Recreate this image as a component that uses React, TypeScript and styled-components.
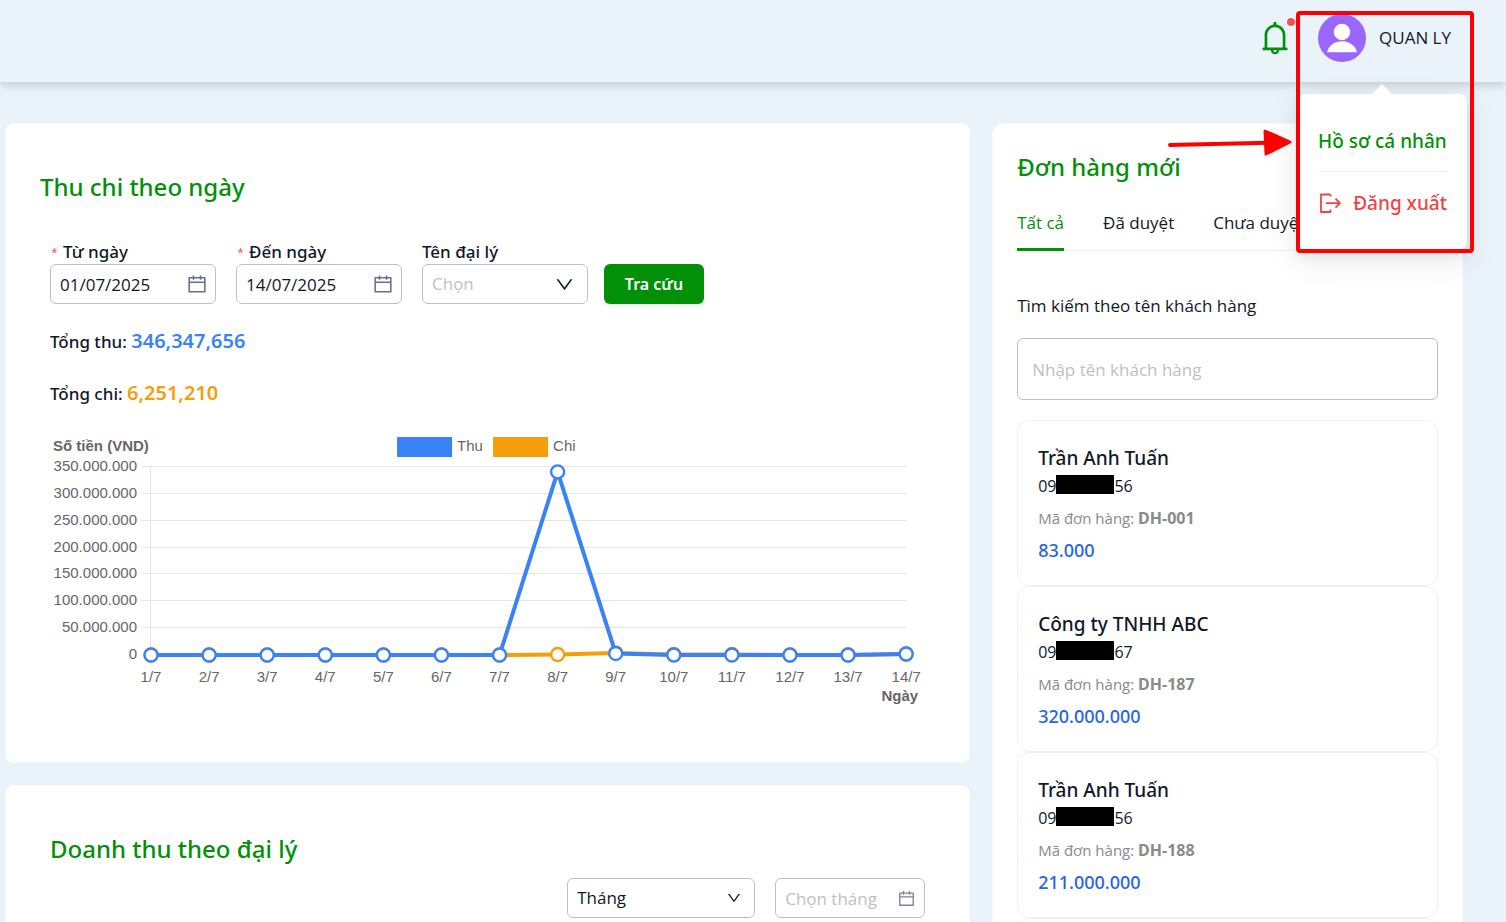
import React from "react";
import styled, { createGlobalStyle } from "styled-components";
import { AiOutlineBell, AiOutlineCalendar, AiOutlineDown } from "react-icons/ai";

const green = "#029009";
const ink = "#111827";
const line = "#f0f0f0";
const panelLine = "#f9f9f9";
const fieldLine = "#bfbfc7";
const strongFont = `"Noto Sans", "Open Sans", sans-serif`;

const GlobalStyle = createGlobalStyle`
  *, *::before, *::after { box-sizing: border-box; }
  body { margin: 0; background: #eaf3fa; }
  body, input, select, button {
    font-family: "Open Sans", "Noto Sans", sans-serif;
    font-size: 17px;
    line-height: 24px;
    color: ${ink};
  }
  h2, h3, p { margin: 0; }
`;

const Page = styled.div`
  height: 100vh;
  overflow-x: hidden;
  overflow-y: auto;
  scrollbar-width: none;
`;

const Header = styled.header`
  position: relative;
  z-index: 2;
  display: flex;
  justify-content: flex-end;
  align-items: flex-start;
  height: 82px;
  padding: 14px 55px 0 16px;
  background: #eaf3fa;
  box-shadow: 0 4px 8px rgba(0, 0, 0, 0.14);
`;

const BellButton = styled.button`
  position: relative;
  display: grid;
  place-items: center;
  width: 38px;
  height: 48px;
  margin-right: 24px;
  padding: 0;
  border: 0;
  background: none;
  color: ${green};
`;

const BellDot = styled.span`
  position: absolute;
  top: 4px;
  right: -1px;
  width: 8px;
  height: 8px;
  border-radius: 50%;
  background: #ff4d4f;
  box-shadow: 0 0 0 1px #fff;
`;

const UserButton = styled.button`
  display: flex;
  align-items: center;
  gap: 13px;
  padding: 0;
  border: 0;
  background: none;
  white-space: nowrap;
`;

const UserMenu = styled.nav`
  position: absolute;
  top: 94px;
  right: 39px;
  display: flex;
  flex-direction: column;
  width: 169px;
  padding: 33px 20px;
  border-radius: 8px;
  background: #fff;
  box-shadow: 0 6px 16px rgba(0, 0, 0, 0.08), 0 3px 6px -4px rgba(0, 0, 0, 0.12),
    0 9px 28px 8px rgba(0, 0, 0, 0.05);
`;

const MenuArrow = styled.svg`
  position: absolute;
  top: -10px;
  left: 72px;
`;

const menuText = `
  font-family: ${strongFont};
  font-size: 19px;
  line-height: 28px;
  font-weight: 500;
  white-space: nowrap;
`;

const ProfileLink = styled.a`
  ${menuText}
  color: ${green};
  text-decoration: none;
  padding-bottom: 16px;
  border-bottom: 1px solid ${line};
`;

const LogoutButton = styled.button`
  ${menuText}
  display: flex;
  align-items: center;
  justify-content: space-between;
  margin-top: 17px;
  padding: 0;
  border: 0;
  background: none;
  color: #f04444;
`;

const Highlight = styled.div`
  position: absolute;
  top: 11px;
  right: 32px;
  width: 178px;
  height: 242px;
  border: 4px solid #f00;
  border-radius: 4px;
  pointer-events: none;
`;

const Pointer = styled.svg`
  position: absolute;
  top: 128px;
  right: 212px;
  pointer-events: none;
`;

const Main = styled.main`
  display: grid;
  grid-template-columns: minmax(0, 41fr) minmax(0, 20fr);
  align-items: start;
  gap: 22px;
  padding: 41px 43px 22px 5px;
`;

const Column = styled.div`
  display: grid;
  gap: 22px;
`;

const Card = styled.section`
  padding: 47px 44px 52px;
  border: 1px solid ${panelLine};
  border-radius: 8px;
  background: #fff;
`;

const Title = styled.h2<{ $outdent?: boolean }>`
  margin-left: ${(p) => (p.$outdent ? "-10px" : "0")};
  font-family: ${strongFont};
  font-size: 24px;
  line-height: 32px;
  font-weight: 500;
  color: ${green};
`;

const FilterForm = styled.form`
  display: flex;
  align-items: flex-end;
  gap: 16px;
  margin-top: 37px;
`;

const Fields = styled.div`
  display: flex;
  gap: 20px;
`;

const Field = styled.div<{ $width: number }>`
  width: ${(p) => p.$width}px;
`;

const Label = styled.label`
  display: flex;
  gap: 4px;
  height: 24px;
  font-family: ${strongFont};
  font-weight: 500;
`;

const Required = styled.span`
  padding-top: 4px;
  font-family: "Liberation Mono", monospace;
  font-size: 15px;
  font-weight: 400;
  color: #ff4d4f;
`;

const Control = styled.div`
  position: relative;
  display: flex;
  align-items: center;

  input,
  select {
    width: 100%;
    height: 40px;
    padding: 0 36px 0 9px;
    border: 1px solid ${fieldLine};
    border-radius: 6px;
    background: #fff;
    appearance: none;
    outline: 0;
  }
  select:invalid,
  input::placeholder {
    color: #bfbfbf;
  }
`;

const ControlIcon = styled.span<{ $color: string; $right: number }>`
  position: absolute;
  right: ${(p) => p.$right}px;
  display: flex;
  color: ${(p) => p.$color};
  pointer-events: none;
`;

const SubmitButton = styled.button`
  width: 100px;
  height: 40px;
  padding: 0;
  border: 0;
  border-radius: 6px;
  background: ${green};
  color: #fff;
  font-family: ${strongFont};
  font-size: 16px;
  font-weight: 600;
  box-shadow: 0 2px 0 rgba(5, 145, 10, 0.08);
`;

const Totals = styled.div`
  display: grid;
  gap: 24px;
  margin-top: 23px;
`;

const Total = styled.p<{ $color: string }>`
  height: 28px;
  font-family: ${strongFont};
  line-height: 28px;
  font-weight: 500;

  strong {
    font-size: 20px;
    font-weight: 600;
    color: ${(p) => p.$color};
  }
`;

const ChartSvg = styled.svg`
  display: block;
  width: 100%;
  margin-top: 23px;
  font-family: "Liberation Sans", Arial, sans-serif;
  font-size: 15px;
  fill: #666;
`;

const PeriodRow = styled.div`
  display: flex;
  justify-content: flex-end;
  gap: 20px;
  margin-top: 13px;
`;

const OrdersCard = styled.section`
  padding: 27px 24px;
  border: 1px solid ${panelLine};
  border-radius: 12px;
  background: #fff;
`;

const Tabs = styled.div`
  display: flex;
  gap: 39px;
  margin-top: 28px;
  border-bottom: 1px solid ${line};
`;

const Tab = styled.button<{ $active?: boolean }>`
  margin-bottom: -1px;
  padding: 0 0 13px;
  border: 0;
  border-bottom: 3px solid ${(p) => (p.$active ? green : "transparent")};
  background: none;
  white-space: nowrap;
  color: ${(p) => (p.$active ? green : ink)};
`;

const SearchLabel = styled.label`
  display: block;
  margin-top: 43px;
`;

const SearchInput = styled.input`
  width: 100%;
  height: 62px;
  margin: 20px 0;
  padding: 0 14px;
  border: 1px solid ${fieldLine};
  border-radius: 6px;
  background: #fff;
  outline: 0;

  &::placeholder {
    color: #bfbfbf;
  }
`;

const OrderList = styled.ul`
  margin: 0;
  padding: 0;
  list-style: none;
`;

const Order = styled.li`
  min-height: 166px;
  padding: 23px 20px;
  border: 1px solid ${line};
  border-radius: 12px;
`;

const Customer = styled.h3`
  font-family: ${strongFont};
  font-size: 19px;
  line-height: 28px;
  font-weight: 500;
`;

const Phone = styled.p`
  display: flex;
  align-items: center;
  font-size: 16px;
  line-height: 28px;
`;

const Redacted = styled.span`
  width: 58px;
  height: 19px;
  margin-bottom: 4px;
  background: #000;
`;

const OrderCode = styled.p`
  height: 24px;
  margin-top: 6px;
  font-size: 15px;
  color: #8a8a8a;

  strong {
    font-family: ${strongFont};
    font-size: 16px;
  }
`;

const Amount = styled.p`
  margin-top: 8px;
  font-family: ${strongFont};
  font-size: 18px;
  font-weight: 500;
  color: #2563eb;
`;

const days = Array.from({ length: 14 }, (_, i) => `${i + 1}/7`);
const income = [0, 0, 0, 0, 0, 0, 0, 341, 3, 0, 0, 0, 0, 2];
const spending = [0, 0, 0, 0, 0, 0, 0, 1, 4, 1, 1, 0, 0, 2];
const ticks = [350, 300, 250, 200, 150, 100, 50, 0];

const xAt = (i: number) => 101 + (i * 755) / 13;
const yAt = (millions: number) => 225 - (millions * 188) / 350;

function Series({ values, color }: { values: number[]; color: string }) {
  return (
    <g stroke={color}>
      <polyline
        points={values.map((v, i) => `${xAt(i)},${yAt(v)}`).join(" ")}
        fill="none"
        strokeWidth={4}
      />
      {values.map((v, i) => (
        <circle key={i} cx={xAt(i)} cy={yAt(v)} r={6.5} fill="#fff" strokeWidth={2.4} />
      ))}
    </g>
  );
}

function Chart() {
  return (
    <ChartSvg viewBox="0 0 875 280" role="img" aria-label="Thu chi theo ngày">
      <text x={3} y={21} fontWeight={700}>Số tiền (VND)</text>
      <rect x={347} y={7} width={55} height={20} fill="#3b82f6" />
      <text x={407} y={21}>Thu</text>
      <rect x={443} y={7} width={55} height={20} fill="#f59e0b" />
      <text x={503} y={21}>Chi</text>
      {ticks.map((t) => {
        const y = Math.round(yAt(t));
        return (
          <g key={t}>
            <line x1={91} x2={856} y1={y - 0.5} y2={y - 0.5} stroke="#e5e5e5" />
            <text x={87} y={y + 4} textAnchor="end">{t === 0 ? "0" : `${t}.000.000`}</text>
          </g>
        );
      })}
      <line x1={100.5} x2={100.5} y1={36} y2={234} stroke="#e5e5e5" />
      <Series values={spending} color="#f59e0b" />
      <Series values={income} color="#3b82f6" />
      {days.map((d, i) => (
        <text key={d} x={xAt(i)} y={252} textAnchor="middle">{d}</text>
      ))}
      <text x={868} y={271} textAnchor="end" fontWeight={700}>Ngày</text>
    </ChartSvg>
  );
}

const orders = [
  { name: "Trần Anh Tuấn", end: "56", code: "DH-001", amount: "83.000" },
  { name: "Công ty TNHH ABC", end: "67", code: "DH-187", amount: "320.000.000" },
  { name: "Trần Anh Tuấn", end: "56", code: "DH-188", amount: "211.000.000" },
];

function DateField({ id, label, value }: { id: string; label: string; value: string }) {
  return (
    <Field $width={166}>
      <Label htmlFor={id}>
        <Required>*</Required>
        {label}
      </Label>
      <Control>
        <input id={id} defaultValue={value} />
        <ControlIcon $color="#64708a" $right={8}>
          <AiOutlineCalendar size={22} />
        </ControlIcon>
      </Control>
    </Field>
  );
}

export default function App() {
  return (
    <Page>
      <GlobalStyle />
      <Header>
        <BellButton aria-label="Thông báo">
          <AiOutlineBell size={38} />
          <BellDot />
        </BellButton>
        <UserButton>
          <svg width="48" height="48" viewBox="0 0 48 48" aria-hidden="true">
            <circle cx="24" cy="24" r="24" fill="#9966ff" />
            <circle cx="24" cy="18" r="8.2" fill="#fff" />
            <path d="M9 38.2C11 31.5 16.5 27.300 24 27.300S37 31.500 39 38.200Z" fill="#fff" />
          </svg>
          QUAN LY
        </UserButton>
        <UserMenu>
          <MenuArrow width="24" height="11" viewBox="0 0 24 11" aria-hidden="true">
            <path d="M0 10.500C3 10 4 8.500 5.500 7L10.500 1.200Q12 -.4 13.500 1.200L18.500 7C20 8.500 21 10 24 10.500Z" fill="#fff" />
          </MenuArrow>
          <ProfileLink href="#profile">Hồ sơ cá nhân</ProfileLink>
          <LogoutButton>
            <svg width="24" height="24" viewBox="0 0 24 24" fill="none" stroke="currentColor" strokeWidth="1.800" strokeLinejoin="round" aria-hidden="true">
              <path d="M12.500 3.500H3V21H12.500V18.500M12.500 3.500V5.500M8 12.200H22M17.500 7.700L22 12.200L17.500 16.700" />
            </svg>
            Đăng xuất
          </LogoutButton>
        </UserMenu>
        <Highlight />
        <Pointer width="126" height="30" viewBox="0 0 126 30" aria-hidden="true">
          <path d="M2 17L100 14.800" stroke="#f00" strokeWidth="4" strokeLinecap="round" />
          <path d="M97 3L122 14L98 26Z" fill="#f00" stroke="#f00" strokeWidth="3" strokeLinejoin="round" />
        </Pointer>
      </Header>

      <Main>
        <Column>
          <Card>
            <Title $outdent>Thu chi theo ngày</Title>
            <FilterForm onSubmit={(e) => e.preventDefault()}>
              <Fields>
                <DateField id="from" label="Từ ngày" value="01/07/2025" />
                <DateField id="to" label="Đến ngày" value="14/07/2025" />
                <Field $width={166}>
                  <Label htmlFor="agency">Tên đại lý</Label>
                  <Control>
                    <select id="agency" required defaultValue="">
                      <option value="">Chọn</option>
                    </select>
                    <ControlIcon $color={ink} $right={13}>
                      <AiOutlineDown size={21} />
                    </ControlIcon>
                  </Control>
                </Field>
              </Fields>
              <SubmitButton type="submit">Tra cứu</SubmitButton>
            </FilterForm>
            <Totals>
              <Total $color="#3b82f6">Tổng thu: <strong>346,347,656</strong></Total>
              <Total $color="#f59e0b">Tổng chi: <strong>6,251,210</strong></Total>
            </Totals>
            <Chart />
          </Card>

          <Card>
            <Title>Doanh thu theo đại lý</Title>
            <PeriodRow>
              <Field $width={188}>
                <Control>
                  <select aria-label="Kỳ" defaultValue="month">
                    <option value="month">Tháng</option>
                  </select>
                  <ControlIcon $color={ink} $right={13}>
                    <AiOutlineDown size={16} />
                  </ControlIcon>
                </Control>
              </Field>
              <Field $width={150}>
                <Control>
                  <input aria-label="Chọn tháng" placeholder="Chọn tháng" />
                  <ControlIcon $color="#7a8499" $right={9}>
                    <AiOutlineCalendar size={19} />
                  </ControlIcon>
                </Control>
              </Field>
            </PeriodRow>
          </Card>
        </Column>

        <OrdersCard>
          <Title>Đơn hàng mới</Title>
          <Tabs role="tablist">
            <Tab role="tab" aria-selected $active>Tất cả</Tab>
            <Tab role="tab">Đã duyệt</Tab>
            <Tab role="tab">Chưa duyệt</Tab>
          </Tabs>
          <SearchLabel htmlFor="search">Tìm kiếm theo tên khách hàng</SearchLabel>
          <SearchInput id="search" placeholder="Nhập tên khách hàng" />
          <OrderList>
            {orders.map((o) => (
              <Order key={o.code}>
                <Customer>{o.name}</Customer>
                <Phone>
                  09<Redacted />{o.end}
                </Phone>
                <OrderCode>
                  Mã đơn hàng: <strong>{o.code}</strong>
                </OrderCode>
                <Amount>{o.amount}</Amount>
              </Order>
            ))}
            <Order aria-busy="true" />
          </OrderList>
        </OrdersCard>
      </Main>
    </Page>
  );
}
